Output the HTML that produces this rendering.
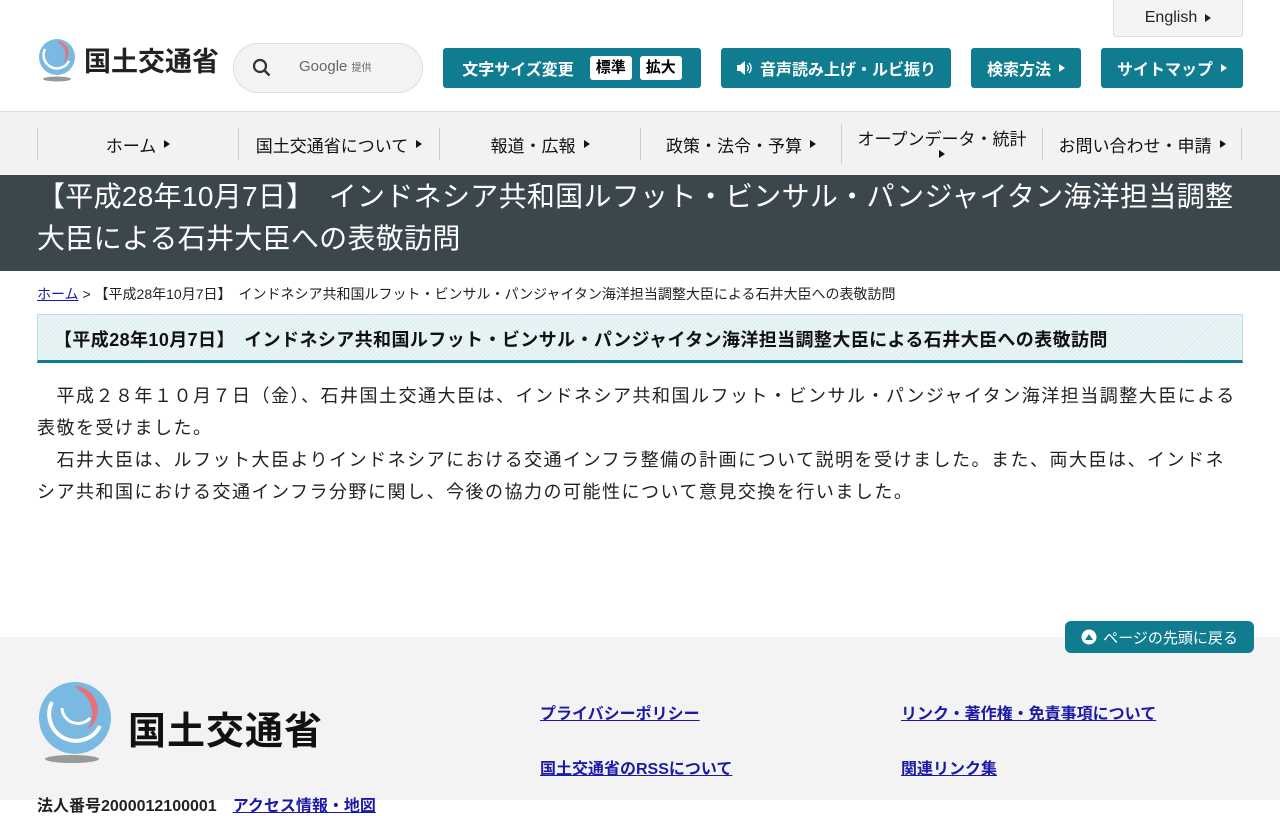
<!DOCTYPE html>
<html lang="ja"><head><meta charset="utf-8"><style>
*{box-sizing:border-box;margin:0;padding:0}
body{width:1280px;height:800px;overflow:hidden;background:#fff;font-family:"Liberation Sans","Noto Sans CJK JP",sans-serif;color:#222;position:relative}
.abs{position:absolute}
.btn{position:absolute;top:48px;height:40px;background:#0f7c8f;color:#fff;border-radius:3px;font-size:16px;font-weight:bold;display:flex;align-items:center;justify-content:center}
.tri{display:inline-block;width:0;height:0;border-left:6px solid currentColor;border-top:4px solid transparent;border-bottom:4px solid transparent;margin-left:8px}
.wb{background:#fff;color:#000;border-radius:3px;padding:0 6px;height:24px;line-height:24px;margin-left:8px;font-size:15px}
.nav{position:absolute;top:111px;left:0;width:1280px;height:64px;background:#f2f2f2;border-top:1px solid #ddd}
.ni{position:absolute;top:16px;height:32px;border-left:1px solid #ccc;font-size:17px;display:flex;align-items:center;justify-content:center;color:#111}
.fl{position:absolute;font-size:16px;font-weight:bold;color:#1a1aa6;text-decoration:underline}
</style></head><body>
<svg class="abs" style="left:37px;top:37px" width="42" height="46" viewBox="0 0 42 46"><circle cx="20" cy="20" r="18" fill="#79b9e2"/><path d="M20 4a12 12 0 0 1 6 22 14 14 0 0 0-4-20z" fill="#e87176"/><path d="M8 12a13 13 0 0 0 24 12" stroke="#fff" stroke-width="2.5" fill="none"/><ellipse cx="20" cy="42" rx="14" ry="2.5" fill="#999"/></svg>
<div class="abs" style="left:84px;top:40px;font-size:27px;color:#222;font-weight:bold;letter-spacing:0px">国土交通省</div>
<div class="abs" style="left:233px;top:43px;width:190px;height:50px;border:1px solid #ddd;border-radius:25px;background:#f4f4f4"></div>
<svg class="abs" style="left:252px;top:58px" width="20" height="20" viewBox="0 0 20 20"><circle cx="8" cy="8" r="6" stroke="#333" stroke-width="2.2" fill="none"/><path d="M12.5 12.5l5 5" stroke="#333" stroke-width="2.4"/></svg>
<div class="abs" style="left:299px;top:58px;font-size:15px;color:#666">Google <span style="font-size:10px">提供</span></div>
<div class="abs" style="left:1113px;top:-1px;width:130px;height:38px;background:#f4f4f4;border:1px solid #ddd;border-radius:0 0 3px 3px;font-size:16px;display:flex;align-items:center;justify-content:center">English<span class="tri"></span></div>
<div class="btn" style="left:443px;width:258px">文字サイズ変更<span class="wb" style="margin-left:16px">標準</span><span class="wb">拡大</span></div>
<div class="btn" style="left:721px;width:230px"><svg width="16" height="16" viewBox="0 0 16 16" style="margin-right:8px"><path d="M1 5h3l5-4v14l-5-4H1z" fill="#fff"/><path d="M11 5a4 4 0 0 1 0 6M13 3a7 7 0 0 1 0 10" stroke="#fff" fill="none" stroke-width="1.3"/></svg>音声読み上げ・ルビ振り</div>
<div class="btn" style="left:971px;width:110px">検索方法<span class="tri"></span></div>
<div class="btn" style="left:1101px;width:142px">サイトマップ<span class="tri"></span></div>
<div class="nav">
<div class="ni" style="left:37px;width:201px">ホーム<span class="tri"></span></div>
<div class="ni" style="left:238px;width:201px">国土交通省について<span class="tri"></span></div>
<div class="ni" style="left:439px;width:201px">報道・広報<span class="tri"></span></div>
<div class="ni" style="left:640px;width:201px">政策・法令・予算<span class="tri"></span></div>
<div class="ni" style="left:841px;width:201px;flex-direction:column;line-height:20px;top:12px;height:40px">オープンデータ・統計<span class="tri" style="margin:0"></span></div>
<div class="ni" style="left:1042px;width:200px;border-right:1px solid #ccc">お問い合わせ・申請<span class="tri"></span></div>
</div>
<div class="abs" style="left:0;top:175px;width:1280px;height:96px;background:#3b474c;color:#fff;font-size:28px;line-height:42px;padding:1px 37px 0 37px;letter-spacing:0.3px">【平成28年10月7日】　インドネシア共和国ルフット・ビンサル・パンジャイタン海洋担当調整大臣による石井大臣への表敬訪問</div>
<div class="abs" style="left:37px;top:284px;font-size:14px;color:#222;white-space:nowrap"><span style="color:#1a1aa6;text-decoration:underline">ホーム</span> &gt; 【平成28年10月7日】　インドネシア共和国ルフット・ビンサル・パンジャイタン海洋担当調整大臣による石井大臣への表敬訪問</div>
<div class="abs" style="left:37px;top:314px;width:1206px;height:49px;border:1px solid #bfdde2;border-bottom:3px solid #0f7c8f;background:repeating-linear-gradient(135deg,#eaf5f7 0 2px,#dcecef 2px 3px);font-size:18px;font-weight:bold;padding:11px 0 0 16px;color:#111;letter-spacing:0.4px;white-space:nowrap">【平成28年10月7日】　インドネシア共和国ルフット・ビンサル・パンジャイタン海洋担当調整大臣による石井大臣への表敬訪問</div>
<div class="abs" style="left:37px;top:380px;width:1204px;font-size:18px;line-height:32px;color:#222;letter-spacing:1.5px">　平成２８年１０月７日（金）、石井国土交通大臣は、インドネシア共和国ルフット・ビンサル・パンジャイタン海洋担当調整大臣による表敬を受けました。<br>　石井大臣は、ルフット大臣よりインドネシアにおける交通インフラ整備の計画について説明を受けました。また、両大臣は、インドネシア共和国における交通インフラ分野に関し、今後の協力の可能性について意見交換を行いました。</div>
<div class="abs" style="left:0;top:637px;width:1280px;height:163px;background:#f3f3f3"></div>
<div class="abs" style="left:1065px;top:621px;width:189px;height:32px;background:#0f7c8f;color:#fff;border-radius:6px;font-size:15px;display:flex;align-items:center;justify-content:center"><svg width="16" height="16" viewBox="0 0 16 16" style="margin-right:6px"><circle cx="8" cy="8" r="7.5" fill="#fff"/><path d="M4 11l4-6 4 6z" fill="#0f7c8f"/></svg>ページの先頭に戻る</div>
<svg class="abs" style="left:38px;top:680px" width="76" height="85" viewBox="0 0 76 85"><circle cx="37" cy="38" r="36" fill="#79b9e2"/><path d="M37 6a24 24 0 0 1 12 44 28 28 0 0 0-8-40z" fill="#e87176"/><path d="M14 22a26 26 0 0 0 48 24" stroke="#fff" stroke-width="4" fill="none"/><path d="M24 28a16 16 0 0 0 28 10" stroke="#fff" stroke-width="3" fill="none"/><ellipse cx="34" cy="79" rx="27" ry="4" fill="#999"/></svg>
<div class="abs" style="left:128px;top:700px;font-size:38px;color:#111;font-weight:bold;letter-spacing:1px">国土交通省</div>
<div class="fl" style="left:540px;top:700px">プライバシーポリシー</div>
<div class="fl" style="left:901px;top:700px">リンク・著作権・免責事項について</div>
<div class="fl" style="left:540px;top:755px">国土交通省のRSSについて</div>
<div class="fl" style="left:901px;top:755px">関連リンク集</div>
<div class="abs" style="left:37px;top:792px;font-size:16px;font-weight:bold">法人番号2000012100001　<span style="color:#1a1aa6;text-decoration:underline">アクセス情報・地図</span></div>
</body></html>
